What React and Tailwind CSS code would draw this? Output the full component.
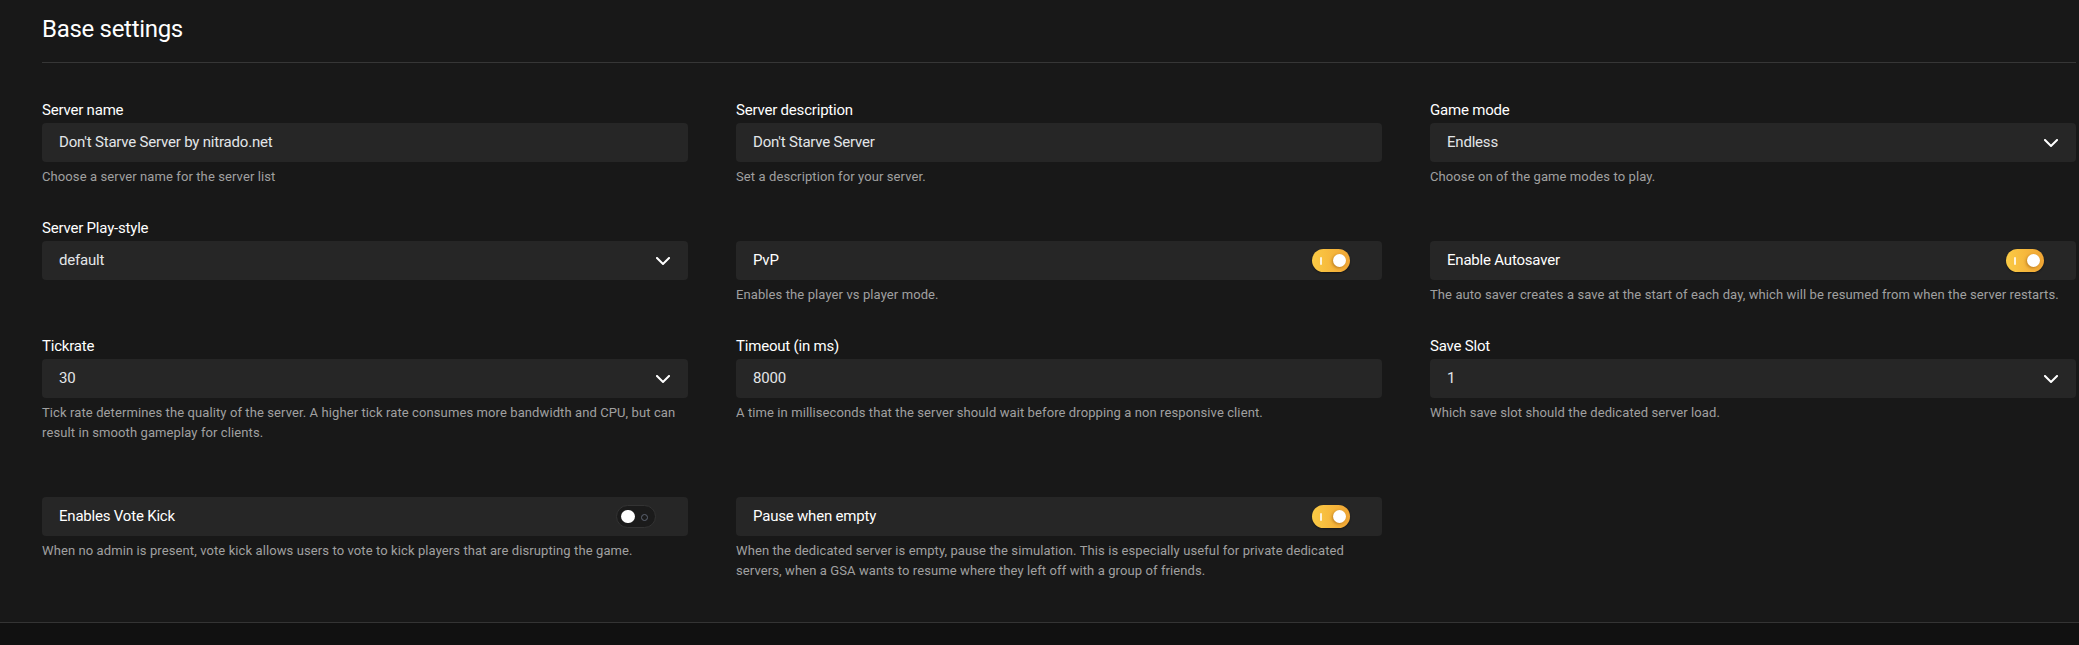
import React from 'react';

const font = { fontFamily: 'Roboto, "Liberation Sans", sans-serif' };

const Chevron = () => (
    <svg width="14" height="8" viewBox="0 0 14 8" fill="none" className="shrink-0">
        <polyline points="1,1 7,7 13,1" stroke="#ffffff" strokeWidth="2" strokeLinecap="square" />
    </svg>
);

const Toggle = ({ on }) => {
    if (on) {
        return (
            <div className="relative w-[38px] h-[23px] rounded-full bg-gradient-to-r from-[#fbcb45] to-[#f0a534] shadow-[0_1px_2px_rgba(0,0,0,0.4)]">
                {/* on mark */}
                <div className="absolute left-[8px] top-[7.5px] w-[1.5px] h-[8px] bg-white/80 rounded" />
                <div className="absolute right-[4px] top-[4.8px] w-[13.5px] h-[13.5px] rounded-full bg-white shadow-[-1px_1px_3px_rgba(120,60,0,0.45)]" />
            </div>
        );
    }
    return (
        <div className="relative w-[40px] h-[23px] rounded-full bg-[#1b1b1b] border border-[#333333]">
            <div className="absolute left-[4px] top-[3.8px] w-[13.5px] h-[13.5px] rounded-full bg-white" />
            <div className="absolute right-[7px] top-[7.5px] w-[7px] h-[7px] rounded-full border-[1.5px] border-[#5d6472]" />
        </div>
    );
};

const Field = ({ label, value, kind = 'input', on, help }) => (
    <div className="flex flex-col">
        <div className="h-6 leading-6 text-[15px] tracking-[-0.2px] text-white mb-px">{kind === 'toggle' ? '' : label}</div>
        <div className="h-[39px] rounded bg-[#262626] flex items-center justify-between pl-[17px] pr-[18px]">
            {kind === 'toggle' ? (
                <>
                    <span className="text-[15px] tracking-[-0.2px] text-white">{label}</span>
                    <div className="mr-[14px]"><Toggle on={on} /></div>
                </>
            ) : (
                <>
                    <span className="text-[15px] tracking-[-0.2px] text-[#e2e5e8]">{value}</span>
                    {kind === 'select' && <Chevron />}
                </>
            )}
        </div>
        {help && <p className="mt-[5px] text-[13px] tracking-[0.1px] leading-5 text-[#a0a0a0]">{help}</p>}
    </div>
);

const fields = [
    { label: 'Server name', value: "Don't Starve Server by nitrado.net", help: 'Choose a server name for the server list' },
    { label: 'Server description', value: "Don't Starve Server", help: 'Set a description for your server.' },
    { label: 'Game mode', value: 'Endless', kind: 'select', help: 'Choose on of the game modes to play.' },
    { label: 'Server Play-style', value: 'default', kind: 'select' },
    { label: 'PvP', kind: 'toggle', on: true, help: 'Enables the player vs player mode.' },
    { label: 'Enable Autosaver', kind: 'toggle', on: true, help: 'The auto saver creates a save at the start of each day, which will be resumed from when the server restarts.' },
    { label: 'Tickrate', value: '30', kind: 'select', help: 'Tick rate determines the quality of the server. A higher tick rate consumes more bandwidth and CPU, but can result in smooth gameplay for clients.' },
    { label: 'Timeout (in ms)', value: '8000', help: 'A time in milliseconds that the server should wait before dropping a non responsive client.' },
    { label: 'Save Slot', value: '1', kind: 'select', help: 'Which save slot should the dedicated server load.' },
    { label: 'Enables Vote Kick', kind: 'toggle', on: false, help: 'When no admin is present, vote kick allows users to vote to kick players that are disrupting the game.' },
    { label: 'Pause when empty', kind: 'toggle', on: true, help: 'When the dedicated server is empty, pause the simulation. This is especially useful for private dedicated servers, when a GSA wants to resume where they left off with a group of friends.' },
];

export default function App() {
    return (
        <div className="min-h-screen flex flex-col bg-[#111111]" style={font}>
            <section className="bg-[#181818] pl-[42px] pr-[3px] pt-[13px] pb-[41px] border-b border-[#343434]">
                <h1 className="text-[24px] tracking-[-0.3px] leading-8 text-white">Base settings</h1>
                <div className="mt-[17px] h-px bg-[#363636]" />
                <div className="mt-[35px] grid grid-cols-3 gap-x-12 gap-y-[29px]">
                    {fields.map((f) => (
                        <Field key={f.label} {...f} />
                    ))}
                </div>
            </section>
            <div className="flex-1" />
        </div>
    );
}
